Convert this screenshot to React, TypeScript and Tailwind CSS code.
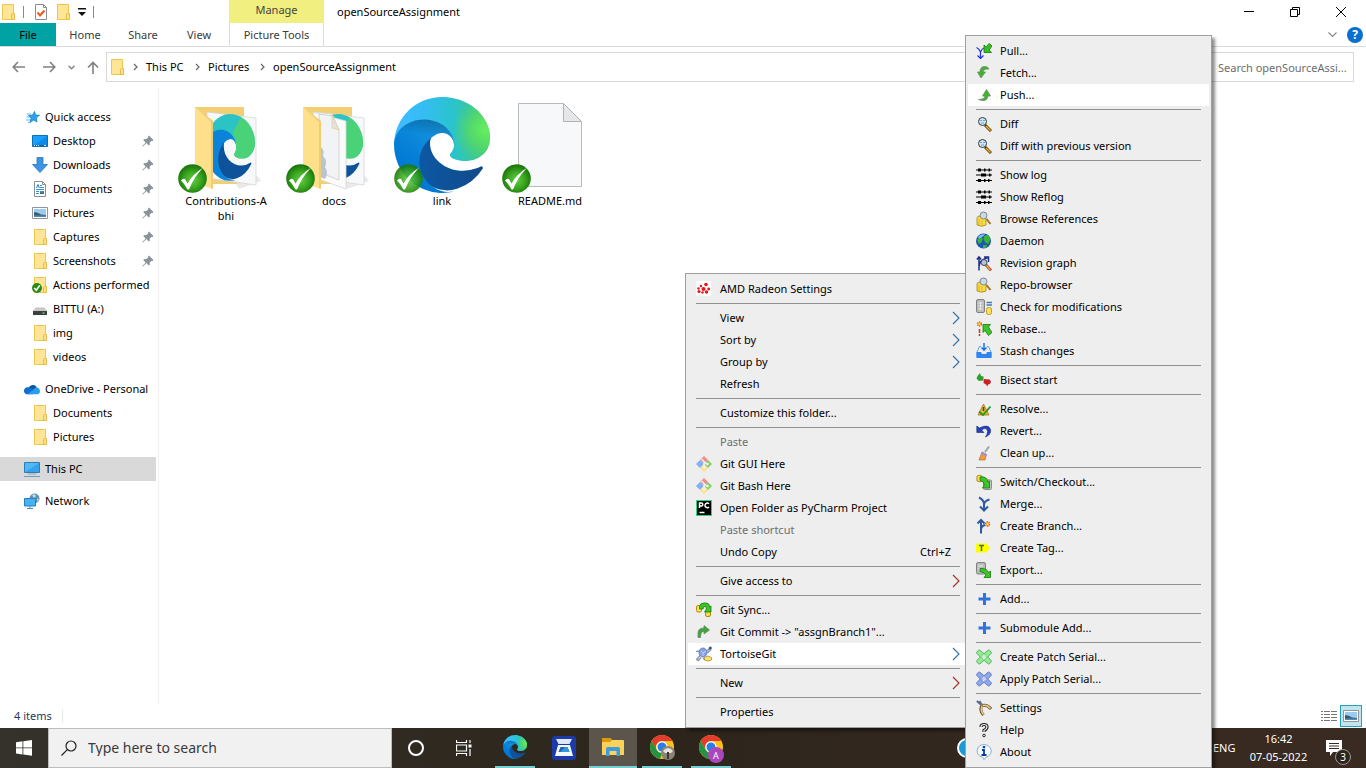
import React, { useId } from "react";

type IconProps = { className?: string };

const S = ({ children, className = "size-4", box = "0 0 16 16" }: { children: React.ReactNode; className?: string; box?: string }) => (
  <svg viewBox={box} className={`${className} shrink-0`} aria-hidden="true" fill="none">
    {children}
  </svg>
);

/* ---------- explorer icons ---------- */

const FolderIcon = ({ className = "size-4" }: IconProps) => (
  <S className={className}>
    <path d="M2.500.5h11v15h-11z" fill="#ffe696" stroke="#eec54e" />
    <path d="M11.500 15.500v-5q0-1 1-1h2v6z" fill="#ffe08a" stroke="#e9bb3f" />
  </S>
);

const SyncedFolderIcon = () => (
  <S>
    <path d="M2.500.5h11v15h-11z" fill="#ffe696" stroke="#eec54e" />
    <path d="M11.500 15.500v-5q0-1 1-1h2v6z" fill="#ffe08a" stroke="#e9bb3f" />
    <circle cx="5" cy="11" r="5" fill="#2c8a17" />
    <path d="M2.300 11l2 2.200L7.800 8.400" stroke="#fff" strokeWidth="1.600" />
  </S>
);

const CheckPageIcon = () => (
  <S>
    <path d="M2.500.5h8l3 3v12h-11z" fill="#fff" stroke="#8a8f94" />
    <path d="M10.500.5v3h3" stroke="#8a8f94" />
    <path d="M4.500 8.500l2.500 3 4.500-5" stroke="#f05a1e" strokeWidth="2" />
  </S>
);

const StarIcon = () => (
  <S>
    <path d="M10.500 2.500L11.500 6l4 .3-3.200 2.500.7 4.200-3.300-2-3.700 2.500 1-4.200L4.500 6.500l4-.4z" fill="#2ea3ea" stroke="#1a82cf" strokeWidth=".8" />
    <path d="M3 5h4M2.500 8h3M2 11h4M4 13.500h2" stroke="#58b8f0" />
  </S>
);

const DesktopIcon = () => (
  <S>
    <path d="M.5 2.500h15v11H.5z" fill="#1aa1fb" stroke="#0b70b8" />
    <path d="M1 13L15 3v10z" fill="#0c8cea" />
    <path d="M1 12.500h14" stroke="#0a64a6" />
    <path d="M2 12.500h1m1 0h1m1 0h1m5 0h2" stroke="#d8f0ff" />
  </S>
);

const DownloadIcon = () => (
  <S>
    <path d="M5 .5h6v7h4.500L8 15.500.5 7.500H5z" fill="#3d93e0" stroke="#2477c5" strokeWidth=".8" />
  </S>
);

const DocumentIcon = () => (
  <S>
    <path d="M2.500.5h8l3 3v12h-11z" fill="#fff" stroke="#8a8f94" />
    <path d="M10.500.5v3h3" stroke="#8a8f94" />
    <path d="M8 4.500h2M8 6.500h4M4 8.500h8M4 10.500h3M4 12.500h3" stroke="#3d93d8" />
    <path d="M4.500 7L6 3.500 7.300 7" stroke="#1f7fca" />
    <path d="M8 10h4v3H8z" fill="#4a8fc0" />
    <path d="M8 11.500h4V13H8z" fill="#42705f" />
  </S>
);

const PictureIcon = () => (
  <S>
    <path d="M.5 2.500h15v11H.5z" fill="#fff" stroke="#8e959b" />
    <path d="M2 4h12v8H2z" fill="#9ccbf0" />
    <path d="M2 7q4 0 7 2.500l5 .5v2H2z" fill="#365f6e" />
    <path d="M2 10.500h12V12H2z" fill="#5a88b8" />
  </S>
);

const DriveIcon = () => (
  <S>
    <path d="M3.500 6.500h9L15 10H1z" fill="#c6c8ca" />
    <path d="M1 10h14v4H1z" fill="#3c3e40" />
    <path d="M10.500 12h2" stroke="#4be05a" strokeWidth="1.400" />
  </S>
);

const OneDriveIcon = () => (
  <S>
    <path d="M4.500 7a4.600 4.600 0 0 1 8.300-.8L8 11z" fill="#0a55a6" />
    <path d="M1.500 12.700A3.600 3.600 0 0 1 3.800 6.200q1.600-.3 3 .6L12 11l-3 2.300H3.500q-1.200 0-2-.6z" fill="#0f6fd0" />
    <path d="M9.500 8.500q1.500-2.600 3.800-2 2.700.8 2.700 3.400 0 3.400-3.500 3.400H3.600z" fill="#2b9df0" />
  </S>
);

const PcIcon = () => (
  <S>
    <path d="M.5 1.500h15v10H.5z" fill="#4fb8f7" stroke="#2c7db5" />
    <path d="M1 11L15 2v9z" fill="#35a2ec" />
    <path d="M4 13h8" stroke="#8fa7b8" />
    <path d="M0 15.500h16" stroke="#6f9cc0" />
  </S>
);

const NetworkIcon = () => (
  <S>
    <circle cx="10.500" cy="5.500" r="5" fill="#5f93b3" />
    <path d="M8 2q3-2 4 1l-2 2zM13 5l2 2-1.500 2z" fill="#c7dbe6" />
    <path d="M.5 5.500h11v7.500H.5z" fill="#45b2f5" stroke="#2a7fb9" />
    <path d="M3 15.500h6M6 13v2" stroke="#4c8db8" />
  </S>
);

const PinIcon = () => (
  <S className="size-3" box="0 0 12 12">
    <path d="M7 .6L11.400 5l-1 1-.8-.3-1.900 2 .1 2-1 .9-2.400-2.500L.9 11.500l-.5-.4 3.200-3.700L1.300 5l.9-.9 2 .1L6.300 2.300 6 1.500z" fill="#87929b" />
  </S>
);

const EdgeLogo = ({ className = "size-24" }: IconProps) => {
  const id = useId();
  const crest =
    "M156.940 153.780c-.81 1.050-3.300 2.500-3.300 5.660 0 2.610 1.700 5.120 4.720 7.230 14.380 10 41.490 8.680 41.560 8.680a59.560 59.560 0 0 0 30.270-8.350 61.380 61.380 0 0 0 30.430-52.880c.26-22.410-8-37.310-11.340-43.910-21.190-41.440-66.930-65.280-116.670-65.280a128 128 0 0 0-128 126.200c.48-36.540 36.800-66.050 80-66.050 3.500 0 23.460.34 42 10.070 16.340 8.580 24.900 18.940 30.850 29.210 6.180 10.670 7.280 24.150 7.280 29.520s-2.740 13.330-7.800 19.900z";
  return (
    <S className={className} box="0 0 256 256">
      <defs>
        <linearGradient id={`${id}a`} x1="63.300" y1="177" x2="241" y2="177" gradientUnits="userSpaceOnUse">
          <stop offset="0" stopColor="#0c59a4" />
          <stop offset="1" stopColor="#114a8b" />
        </linearGradient>
        <linearGradient id={`${id}b`} x1="157" y1="95" x2="46" y2="217" gradientUnits="userSpaceOnUse">
          <stop offset="0" stopColor="#1b9de2" />
          <stop offset=".16" stopColor="#1595df" />
          <stop offset=".67" stopColor="#0680d7" />
          <stop offset="1" stopColor="#0078d4" />
        </linearGradient>
        <linearGradient id={`${id}c`} x1="20" y1="110" x2="250" y2="110" gradientUnits="userSpaceOnUse">
          <stop offset="0" stopColor="#3dbcff" />
          <stop offset=".25" stopColor="#36bdf5" />
          <stop offset=".6" stopColor="#2ac3cf" />
          <stop offset="1" stopColor="#40cb80" />
        </linearGradient>
        <radialGradient id={`${id}d`} cx="250" cy="92" r="90" gradientUnits="userSpaceOnUse">
          <stop offset="0" stopColor="#66f05e" />
          <stop offset=".5" stopColor="#58dc62" stopOpacity=".8" />
          <stop offset="1" stopColor="#4fd070" stopOpacity="0" />
        </radialGradient>
        <linearGradient id={`${id}e`} x1="100" y1="60" x2="90" y2="110" gradientUnits="userSpaceOnUse">
          <stop offset="0" stopColor="#003a6b" stopOpacity=".45" />
          <stop offset="1" stopColor="#003a6b" stopOpacity="0" />
        </linearGradient>
      </defs>
      <g transform="translate(-4.630 -4.920)">
        <path d="M235.680 190.500a93.730 93.730 0 0 1-10.540 4.710 101.870 101.870 0 0 1-35.900 6.460c-47.320 0-88.540-32.550-88.540-74.320a31.480 31.480 0 0 1 16.430-27.310c-42.800 1.800-53.800 46.400-53.800 72.530 0 73.880 68.090 81.370 82.760 81.370 7.910 0 19.840-2.300 27-4.560l1.310-.44a128.340 128.340 0 0 0 66.600-52.800 4 4 0 0 0-5.320-5.640z" fill={`url(#${id}a)`} />
        <path d="M110.340 246.340A79.200 79.200 0 0 1 87.600 225a80.720 80.720 0 0 1 29.530-120c3.120-1.470 8.450-4.130 15.540-4a32.350 32.350 0 0 1 25.690 13 31.880 31.880 0 0 1 6.360 18.660c0-.21 24.460-79.600-80-79.600-43.900 0-80 41.660-80 78.210a130.150 130.150 0 0 0 12.110 56 128 128 0 0 0 156.380 67.110 75.550 75.550 0 0 1-62.780-8z" fill={`url(#${id}b)`} />
        <path d="M4.630 131q20-80 80-78 104 0 80 79.600a32 32 0 0 0-32-31.600q-7 0-15.500 4-30 20-113 26z" fill={`url(#${id}e)`} />
        <path d={crest} fill={`url(#${id}c)`} />
        <path d={crest} fill={`url(#${id}d)`} />
      </g>
    </S>
  );
};

const SyncBadge = ({ translucent = false }: { translucent?: boolean }) => {
  const id = useId();
  return (
    <svg viewBox="0 0 29 29" className="absolute bottom-0 left-0 size-[29px]" aria-hidden="true" fill="none">
      <defs>
        <radialGradient id={id} cx=".5" cy=".55" r=".5">
          <stop offset="0" stopColor="#62cf43" />
          <stop offset=".6" stopColor="#3aa51f" />
          <stop offset="1" stopColor="#1d7a0c" />
        </radialGradient>
      </defs>
      <circle cx="14.500" cy="14.500" r="14.300" fill={`url(#${id})`} opacity={translucent ? 0.9 : 1} />
      <path d="M3 16.500q2-2.500 4-1.500l2.500 4.500Q15 10 25 3.800 16 13 11 25.500H9.500Q6.500 19.500 3 16.500z" fill="#fff" />
    </svg>
  );
};

const BigFolder = ({ docs = false }: { docs?: boolean }) => (
  <div className="relative size-24">
    <svg viewBox="0 0 96 96" className="size-24" fill="none" aria-hidden="true">
      <path d="M17 10h49v77H17z" fill="#f3cf73" />
      <path d="M61 92l22-8-4-5-21 8z" fill="#e9e9e9" />
      <path d="M29 15l49 6v67l-49-7z" fill="#f7f8fa" stroke="#d5d7da" strokeWidth=".8" />
      <svg x="27" y="17" width="50" height="67" viewBox="0 0 256 256" preserveAspectRatio="none">
        <path d="M231 186a94 94 0 0 1-46 11c-47 0-89-33-89-75a31 31 0 0 1 17-27c-43 2-54 46-54 73 0 73 68 81 83 81 8 0 20-2 27-5a128 128 0 0 0 68-53 4 4 0 0 0-6-5z" fill="#0e529a" />
        <path d="M106 241A79 79 0 0 1 83 220a81 81 0 0 1 30-120c3-1 8-4 15-4a32 32 0 0 1 26 13 32 32 0 0 1 6 19c0 0 24-80-80-80C36 48 0 90 0 126a130 130 0 0 0 12 56 128 128 0 0 0 156 67 76 76 0 0 1-62-8z" fill="#0b83d8" />
        <path d="M152 149c-1 1-3 2-3 6 0 2 2 5 5 7 14 10 41 8 41 8a61 61 0 0 0 61-61C256 87 248 72 244 65 223 24 177 0 128 0A128 128 0 0 0 0 126c0-36 37-66 80-66 4 0 24 0 42 10 16 9 25 19 31 30 6 10 7 24 7 29s-3 13-8 20z" fill="#2cc3c4" />
        <path d="M185 12q42 18 60 54c14 30 14 50 8 64a61 61 0 0 1-58 40s-27 2-41-8c-3-2-5-5-5-7 0-4 2-5 3-6 5-7 8-15 8-20 0-40-20-55-20-55z" fill="#51d665" opacity=".8" />
      </svg>
      {docs && (
        <>
          <path d="M27 15l33 9v68l-25-9z" fill="#fbfbfc" stroke="#d3d5d8" strokeWidth=".8" />
          <path d="M33 17l14 2 6 14v50l-18-7z" fill="#f2f3f4" stroke="#c8cacc" strokeWidth=".8" />
          <path d="M46 18v13l7 2z" fill="#e2e3e4" stroke="#e5cf98" strokeWidth=".8" />
          <path d="M34 50q5 2 3 9 5 5 2 11 4 6 0 12l-5-2z" fill="#b9c4cf" />
        </>
      )}
      <path d="M17 10l18 14v68l-18-6z" fill="#ffe08a" />
      <path d="M17 10l18 14v68l-2-.6V25z" fill="#f0cd74" />
    </svg>
    <SyncBadge />
  </div>
);

const BigPage = () => (
  <div className="relative size-24">
    <svg viewBox="0 0 96 96" className="size-24" fill="none" aria-hidden="true">
      <path d="M16.500 6.500h45l18 18v65h-63z" fill="#f7f8f9" stroke="#b9bbbd" />
      <path d="M61.500 6.500v18h18z" fill="#e6e7e8" stroke="#b0b2b4" />
    </svg>
    <SyncBadge />
  </div>
);

/* ---------- menu icons ---------- */

const AmdIcon = () => (
  <S>
    <path d="M0 0h15v15H0z" fill="#fff" />
    <g fill="#e8141c">
      <circle cx="7.500" cy="8" r="2" /><circle cx="2.500" cy="7.500" r="1.300" /><circle cx="5" cy="5" r="1.200" /><circle cx="10" cy="3.500" r="1.800" />
      <circle cx="12.700" cy="8" r="1.400" /><circle cx="10.500" cy="11" r="1.700" /><circle cx="6.500" cy="11.500" r="1.200" /><circle cx="3" cy="10.500" r="1.600" />
    </g>
  </S>
);

const GitIcon = () => (
  <S>
    <path d="M8 0l4 4-4 4-4-4z" fill="#f58a8a" />
    <path d="M12 4l4 4-4 4-4-4z" fill="#84cf68" />
    <path d="M4 4l4 4-4 4-4-4z" fill="#7fb0fa" />
    <path d="M8 8l4 4-4 4-4-4z" fill="#fde08a" />
    <path d="M5.500 3L11 8.500M8 5.500V12" stroke="#f4f4f4" strokeWidth="1.300" />
    <circle cx="11.500" cy="8" r="1.300" fill="#f4f4f4" /><circle cx="8" cy="11.500" r="1.300" fill="#f4f4f4" />
  </S>
);

const PyCharmIcon = () => (
  <span className="flex size-4 shrink-0 border border-[#21d789] bg-black" aria-hidden="true">
    <svg viewBox="0 0 14 14" className="size-[14px]" fill="none" stroke="#fff" strokeWidth="1.500">
      <path d="M2.500 7V2h1.800a1.500 1.500 0 0 1 0 3H2.500M12 2.800A2.300 2.300 0 1 0 12 6M2.500 11.500h5" />
    </svg>
  </span>
);

const SyncIcon = () => (
  <S>
    <rect x=".5" y="3.500" width="5" height="6.500" rx="1.500" fill="#fbe05a" stroke="#b58a12" />
    <rect x="9.500" y="8" width="5" height="6.500" rx="1.500" fill="#fbd94c" stroke="#b58a12" />
    <path d="M3.500 7V4.500Q4 1 8 1h2q3.500 0 3.500 4l1.500-1v6H8.500L10 8q1-4-2-3.500L7 7z" fill="#3fc52a" stroke="#16780c" strokeWidth=".8" />
  </S>
);

const CommitIcon = () => (
  <S>
    <path d="M2 13.500V9q0-5 6-5V1.500L13.500 6 8 10V7.500Q4.500 7 4.500 13.500z" fill="#3fa536" stroke="#6c8a6a" strokeWidth=".8" />
  </S>
);

const TortoiseIcon = () => (
  <S>
    <path d="M11 5l2-2 1.500 1-3 3M4 5L0 5.500M4 9.500l-3.500 4 2 1 2.500-3M7 12l2 2" stroke="#8b9cb8" strokeWidth="1.500" />
    <ellipse cx="7" cy="6.500" rx="4" ry="4.500" fill="#86a3e6" stroke="#5b74b0" strokeWidth=".8" />
    <path d="M5 5l2 2 3-2M7 7v3" stroke="#bfd1f8" />
    <circle cx="14.300" cy="2" r="1.500" fill="#31577e" />
    <path d="M8.500 11.500q3.500-3 7 0v2.500q-3.500 2-7 0z" fill="#fbe27a" stroke="#b38e20" strokeWidth=".8" />
  </S>
);

const PullIcon = () => (
  <S>
    <path d="M.5 4.500Q3 5.500 4.500 9 5.500 6 8 5M4.500 9v6M1.500 12.500L4.500 15.500 7.500 12.500" stroke="#1d2fe0" strokeWidth="1.200" />
    <path d="M8 2v7.500h7.500l-2.300-2.500L16 3l-3-2.600-2.700 3.600z" fill="#35c21f" stroke="#147a08" strokeWidth=".8" />
  </S>
);
const FetchIcon = () => (
  <S>
    <path d="M13 4Q12 1 8 1.500 4 2 4 7H1.500L5 13l4.500-6H7Q7.500 3.500 13 4z" fill="#43b32d" stroke="#6f8c6c" strokeWidth=".8" />
  </S>
);
const PushIcon = () => (
  <S>
    <path d="M2.500 12.500Q11 16 12 9h2.500L10.500 2.500 6.500 9H9Q8.500 12.500 2.500 12.500z" fill="#43b32d" stroke="#6f8c6c" strokeWidth=".8" />
  </S>
);
const MagnifierIcon = () => (
  <S>
    <path d="M9 9l6 6" stroke="#5a3a08" strokeWidth="3" />
    <path d="M10 10l4.500 4.500" stroke="#e9a52c" strokeWidth="1.600" />
    <circle cx="6.500" cy="5.500" r="4" fill="#cfe8f8" stroke="#30373c" />
    <path d="M4 4.500h2m1 0h2M5 7h3" stroke="#6ea5c6" />
  </S>
);
const LogIcon = () => (
  <S>
    <path d="M0 3h16M0 8h16M0 13.500h16" stroke="#000" />
    <path d="M2 3h3M8 3h1.500M12.500 3H14M5 8h5M13 8h1.500M2 13.500h3M8 13.500h1.500M12 13.500h1.500" stroke="#000" strokeWidth="3" />
  </S>
);
const BrowseIcon = () => (
  <S>
    <path d="M1 7q0-2 3-2h3q3 0 3 2v7q-4 2.500-9 0z" fill="#f9dc45" stroke="#a8841b" strokeWidth=".8" />
    <path d="M3 8v6M6 9v6" stroke="#e0b62a" />
    <path d="M10.500 8l4 5" stroke="#a57318" strokeWidth="2" />
    <circle cx="7.500" cy="4.500" r="3.500" fill="#cbd9e4" stroke="#7c8790" />
  </S>
);
const GlobeIcon = () => (
  <S>
    <circle cx="7.500" cy="8" r="7.500" fill="#1b56b0" />
    <path d="M1 7q2-3 4-3l2 2-2 4-2 1zM8 3l4-1.500L14.500 6l-2 5-3-1-2-4zM7 12l4 0-1 3-3 0z" fill="#3bb03a" />
    <path d="M2 4Q5 .5 9 1.500L6 4 3 5.500z" fill="#7fc8f2" />
  </S>
);
const GraphIcon = () => (
  <S>
    <path d="M3 15.500V2M.8 4.500L3 2l2.200 2.500M3 12Q3 5 12 2.500M8 2h4.500V6.500M12.500 3v4" stroke="#1e2e8e" strokeWidth="1.500" />
    <path d="M10 10l5 5.500" stroke="#a04a18" strokeWidth="2.800" />
    <path d="M10.500 10.500l4 4.500" stroke="#f0a060" strokeWidth="1.400" />
    <circle cx="8" cy="7.500" r="3" fill="#b3c5d6" stroke="#3d4654" />
  </S>
);
const CheckModsIcon = () => (
  <S>
    <rect x=".5" y=".5" width="8" height="13" rx="1.500" fill="#b9bbbd" stroke="#7f8183" />
    <path d="M2 4h5M2 7h5M2 10h5M4.500 3v8" stroke="#e3e4e5" />
    <path d="M10.500 3.500H16M10.500 6H16" stroke="#3f7fb0" strokeWidth="1.300" />
    <rect x="10.500" y="8.500" width="5" height="7" rx="2" fill="#fbe05a" stroke="#c29722" />
  </S>
);
const RebaseIcon = () => (
  <S>
    <circle cx="3.500" cy="3" r="2" fill="#ffd23a" stroke="#f0501e" strokeDasharray="1.200 .8" strokeWidth="1.400" />
    <path d="M3.500 8v4M3.500 13v2" stroke="#e8281c" strokeWidth="1.500" />
    <path d="M7 3.500h7.500L12.500 6l3.500 5.500-3.500 3L9 9.500 7 11.500z" fill="#3fc52a" stroke="#147a08" strokeWidth=".8" />
  </S>
);
const StashIcon = () => (
  <S>
    <path d="M5 3.500H3.500L1 9v5.500h14V9l-2.500-5.500H11" stroke="#5aa0f0" />
    <path d="M.5 9H5l1 2h4l1-2h4.500v6H.5z" fill="#2f86f2" />
    <path d="M8 0v7M5.500 4.500L8 7.200l2.500-2.700" stroke="#1d73dd" strokeWidth="1.500" />
  </S>
);
const BisectIcon = () => (
  <S>
    <path d="M4 1l1 3 2.500.5v4L3 9 .5 6.500 1.500 4z" fill="#2fa030" />
    <path d="M8 7l5.500.5 1.500 2-1 2.500-2 .5-.5 2-1.500-2L7.500 11z" fill="#cf1f26" />
  </S>
);
const ResolveIcon = () => (
  <S>
    <path d="M7.500 3L13 14H2z" fill="#efb52e" stroke="#a3761a" strokeWidth=".8" />
    <path d="M7.500 6v4" stroke="#5a3d06" strokeWidth="1.600" />
    <path d="M3 10.500l4 3.500 7.500-8.500" stroke="#1d9a1a" strokeWidth="1.800" />
  </S>
);
const RevertIcon = () => (
  <S>
    <path d="M.8 3v6.500H8L5.500 7Q11 3.500 11.500 8.500q0 3-2 5.500 6-2.500 5-7.500Q12.500.5 3.500 5z" fill="#2542b8" stroke="#15277c" strokeWidth=".6" />
  </S>
);
const BroomIcon = () => (
  <S>
    <path d="M13 1.500L9 7" stroke="#9aa4ae" strokeWidth="2" />
    <path d="M6 7l4.500 2.500L9 15H3z" fill="#f39b3d" stroke="#a9621a" strokeWidth=".6" />
    <path d="M6 6.500l5 3-1 1.800-5-2.500z" fill="#9c8fe0" />
  </S>
);
const SwitchIcon = () => (
  <S>
    <path d="M1 2q2-1.500 5 0v5q-3 1.500-5 0z" fill="#fbe05a" stroke="#b58a12" />
    <rect x="7.500" y="6" width="8" height="9.500" rx="1" fill="#c2c4c6" stroke="#8a8c8e" />
    <path d="M4 3q7-1 8 5l1.500-1v7H6.500L8.500 11Q8 7 4 6.500z" fill="#3fc52a" stroke="#147a08" strokeWidth=".8" />
  </S>
);
const MergeIcon = () => (
  <S>
    <path d="M3 1.500Q8 4 8 8v6M13.500 3.500Q8 5 8 9M4 10.500l4 4 4-4" stroke="#2f5aa0" strokeWidth="2" />
  </S>
);
const BranchIcon = () => (
  <S>
    <path d="M5 15.500V2M1.500 5.500L5 2l3.500 3.500M5 12q0-4 4-5" stroke="#2f5aa0" strokeWidth="2" />
    <circle cx="11.500" cy="6" r="2" fill="#ffe56a" stroke="#f0501e" strokeDasharray="1.200 .7" strokeWidth="1.600" />
  </S>
);
const TagIcon = () => (
  <S>
    <path d="M0 3.500h10.500L14 8l-3.500 4.500H0z" fill="#ffff00" />
    <path d="M3 5.500h5M5.500 5.500V11" stroke="#3e7a10" strokeWidth="1.500" />
  </S>
);
const ExportIcon = () => (
  <S>
    <rect x=".5" y=".5" width="9" height="11.500" rx="1.500" fill="#b9bbbd" stroke="#7f8183" />
    <path d="M2 4h5M2 7h3" stroke="#ececec" />
    <path d="M4 6.500q7-.5 8.500 4l2-1.500v6.500H8L10 13Q9 10 4 9.500z" fill="#3fc52a" stroke="#147a08" strokeWidth=".8" />
  </S>
);
const PlusIcon = () => (
  <S>
    <path d="M8.500 2v12M2.500 8h12" stroke="#2f74dd" strokeWidth="3" />
  </S>
);
const Patch = ({ fill, edge }: { fill: string; edge: string }) => (
  <S>
    <path d="M4 1.300q-.8-.6-1.600 0L.9 3Q.2 3.700.9 4.500L4.300 8 .9 11.500q-.7.800 0 1.500l1.500 1.700q.8.600 1.600 0L8 11.300l4 3.400q.8.600 1.600 0l1.500-1.700q.7-.7 0-1.500L11.700 8l3.400-3.500q.7-.8 0-1.500l-1.500-1.700q-.8-.6-1.600 0L8 4.700z" fill={fill} stroke={edge} />
    <path d="M4.500 8L8 4.500 11.500 8 8 11.500z" fill="#ffffff55" stroke={edge} strokeWidth=".7" />
    <path d="M7 7h.8M8.500 8.500h.8M7 9.500h.8M8.800 6.500h.6" stroke="#fff" />
  </S>
);
const GreenPatch = () => <Patch fill="#8fee94" edge="#62b068" />;
const BluePatch = () => <Patch fill="#8ba6f2" edge="#6a7fb8" />;
const SettingsIcon = () => (
  <S>
    <path d="M6 5.500Q3 10 7.500 15M6 5.500q5-1.500 9 3.500" stroke="#6e5630" strokeWidth="3" />
    <path d="M6 6q-2 4.500 1.500 8.500M6.500 5.500q4.500-1 8 3" stroke="#e8c98a" strokeWidth="1.500" />
    <path d="M.8 1l4.500 4M3.500 1l2 3.500" stroke="#5c6f88" strokeWidth="2" />
  </S>
);
const HelpIcon = () => (
  <S>
    <path d="M5 5q0-2.500 3-2.500t3 2.500Q11 7 8 8.500V10" stroke="#222" strokeWidth="3.200" />
    <path d="M5 5q0-2.500 3-2.500t3 2.500Q11 7 8 8.500V10" stroke="#e8e8e8" strokeWidth="1.200" />
    <circle cx="8" cy="13.500" r="1.300" fill="#eee" stroke="#222" />
  </S>
);
const AboutIcon = () => (
  <S>
    <path d="M8 .5a7.500 6.500 0 0 1 2 12.700L8 15.700l-1.500-2.500A7.500 6.500 0 0 1 8 .5z" fill="#f3f8fd" stroke="#8fb0cf" />
    <path d="M8 2v2.200" stroke="#0d3c9c" strokeWidth="2.400" />
    <path d="M6 6h2v5M5.500 11h5" stroke="#0d3c9c" strokeWidth="1.800" />
  </S>
);

/* ---------- menus ---------- */

type Entry =
  | null
  | { label: string; Icon?: React.FC; sub?: boolean; off?: boolean; hot?: boolean; keys?: string };

const folderMenu: Entry[] = [
  { label: "AMD Radeon Settings", Icon: AmdIcon },
  null,
  { label: "View", sub: true },
  { label: "Sort by", sub: true },
  { label: "Group by", sub: true },
  { label: "Refresh" },
  null,
  { label: "Customize this folder..." },
  null,
  { label: "Paste", off: true },
  { label: "Git GUI Here", Icon: GitIcon },
  { label: "Git Bash Here", Icon: GitIcon },
  { label: "Open Folder as PyCharm Project", Icon: PyCharmIcon },
  { label: "Paste shortcut", off: true },
  { label: "Undo Copy", keys: "Ctrl+Z" },
  null,
  { label: "Give access to", sub: true },
  null,
  { label: "Git Sync...", Icon: SyncIcon },
  { label: 'Git Commit -> "assgnBranch1"...', Icon: CommitIcon },
  { label: "TortoiseGit", Icon: TortoiseIcon, sub: true, hot: true },
  null,
  { label: "New", sub: true },
  null,
  { label: "Properties" },
];

const gitMenu: Entry[] = [
  { label: "Pull...", Icon: PullIcon },
  { label: "Fetch...", Icon: FetchIcon },
  { label: "Push...", Icon: PushIcon, hot: true },
  null,
  { label: "Diff", Icon: MagnifierIcon },
  { label: "Diff with previous version", Icon: MagnifierIcon },
  null,
  { label: "Show log", Icon: LogIcon },
  { label: "Show Reflog", Icon: LogIcon },
  { label: "Browse References", Icon: BrowseIcon },
  { label: "Daemon", Icon: GlobeIcon },
  { label: "Revision graph", Icon: GraphIcon },
  { label: "Repo-browser", Icon: BrowseIcon },
  { label: "Check for modifications", Icon: CheckModsIcon },
  { label: "Rebase...", Icon: RebaseIcon },
  { label: "Stash changes", Icon: StashIcon },
  null,
  { label: "Bisect start", Icon: BisectIcon },
  null,
  { label: "Resolve...", Icon: ResolveIcon },
  { label: "Revert...", Icon: RevertIcon },
  { label: "Clean up...", Icon: BroomIcon },
  null,
  { label: "Switch/Checkout...", Icon: SwitchIcon },
  { label: "Merge...", Icon: MergeIcon },
  { label: "Create Branch...", Icon: BranchIcon },
  { label: "Create Tag...", Icon: TagIcon },
  { label: "Export...", Icon: ExportIcon },
  null,
  { label: "Add...", Icon: PlusIcon },
  null,
  { label: "Submodule Add...", Icon: PlusIcon },
  null,
  { label: "Create Patch Serial...", Icon: GreenPatch },
  { label: "Apply Patch Serial...", Icon: BluePatch },
  null,
  { label: "Settings", Icon: SettingsIcon },
  { label: "Help", Icon: HelpIcon },
  { label: "About", Icon: AboutIcon },
];

const Menu = ({ entries, label, className, ruleEnd }: { entries: Entry[]; label: string; className: string; ruleEnd: string }) => (
  <ul
    role="menu"
    aria-label={label}
    className={`absolute border border-[#a0a0a0] bg-[#eeeeee] py-1 pl-[2px] shadow-[3px_3px_3px_rgba(0,0,0,0.45)] ${className}`}
  >
    {entries.map((e, i) =>
      e === null ? (
        <li key={i} role="separator" className={`flex h-[7px] items-center pl-2 ${ruleEnd}`}>
          <span className="h-px flex-1 bg-[#919191]" />
        </li>
      ) : (
        <li key={i} role="none">
          <button
            type="button"
            role="menuitem"
            disabled={e.off}
            className={`flex h-[22px] w-full items-center gap-2 pl-2 text-left ${e.hot ? "bg-white" : ""} ${e.off ? "text-[#6d6d6d]" : "text-black"}`}
          >
            <span className="flex size-4 shrink-0">{e.Icon && <e.Icon />}</span>
            <span className="flex-1 whitespace-nowrap">{e.label}</span>
            {e.keys && <span className="pr-[14px]">{e.keys}</span>}
            {e.sub && (
              <svg viewBox="0 0 8 14" className="mr-[5px] h-[14px] w-2" fill="none" aria-hidden="true">
                <path d="M1 1l6 6-6 6" stroke={e.label === "New" || e.label === "Give access to" ? "#a03028" : "#2f6fa8"} strokeWidth="1.100" />
              </svg>
            )}
          </button>
        </li>
      ),
    )}
  </ul>
);

/* ---------- sidebar ---------- */

type Place = { label: string; Icon: React.FC; root?: boolean; pinned?: boolean; current?: boolean };

const places: Place[][] = [
  [
    { label: "Quick access", Icon: StarIcon, root: true },
    { label: "Desktop", Icon: DesktopIcon, pinned: true },
    { label: "Downloads", Icon: DownloadIcon, pinned: true },
    { label: "Documents", Icon: DocumentIcon, pinned: true },
    { label: "Pictures", Icon: PictureIcon, pinned: true },
    { label: "Captures", Icon: FolderIcon, pinned: true },
    { label: "Screenshots", Icon: FolderIcon, pinned: true },
    { label: "Actions performed", Icon: SyncedFolderIcon },
    { label: "BITTU (A:)", Icon: DriveIcon },
    { label: "img", Icon: FolderIcon },
    { label: "videos", Icon: FolderIcon },
  ],
  [
    { label: "OneDrive - Personal", Icon: OneDriveIcon, root: true },
    { label: "Documents", Icon: FolderIcon },
    { label: "Pictures", Icon: FolderIcon },
  ],
  [{ label: "This PC", Icon: PcIcon, root: true, current: true }],
  [{ label: "Network", Icon: NetworkIcon, root: true }],
];

const Sidebar = () => (
  <nav aria-label="Folders" className="flex w-[159px] shrink-0 flex-col gap-2 border-r border-[#f0f0f0] pt-[17px] pr-[2px]">
    {places.map((group, g) => (
      <ul key={g}>
        {group.map((p) => (
          <li key={p.label}>
            <a
              href="#"
              className={`flex h-6 items-center gap-[5px] pr-[2px] ${p.root ? "pl-6" : "pl-8"} ${p.current ? "bg-[#d9d9d9]" : ""}`}
            >
              <p.Icon />
              <span className="flex-1 whitespace-nowrap">{p.label}</span>
              {p.pinned && <PinIcon />}
            </a>
          </li>
        ))}
      </ul>
    ))}
  </nav>
);

/* ---------- taskbar ---------- */

const ChromeLogo = ({ badge }: { badge: React.ReactNode }) => (
  <span className="relative flex">
    <svg viewBox="0 0 24 24" className="size-6" aria-hidden="true">
      <circle cx="12" cy="12" r="12" fill="#fbc116" />
      <path d="M12 0a12 12 0 0 1 10.400 6H12a6 6 0 0 0-5.200 9L1.600 6A12 12 0 0 1 12 0z" fill="#e33b2e" />
      <path d="M1.600 6l5.200 9A6 6 0 0 0 12 18l-2 5.800A12 12 0 0 1 1.600 6z" fill="#229342" />
      <circle cx="12" cy="12" r="5.700" fill="#fff" />
      <circle cx="12" cy="12" r="4.500" fill="#2a7de9" />
    </svg>
    {badge}
  </span>
);

const ScannerIcon = () => (
  <S className="size-6" box="0 0 24 24">
    <rect width="24" height="24" rx="3" fill="#1c3aa8" />
    <path d="M4 3h16l-2.500 5h-11z" fill="#dfe6f5" />
    <path d="M6 9h12l3 11H3z" fill="#f4f7fc" />
    <path d="M8.500 11h7l2 5h-11z" fill="#1f62b8" />
    <path d="M13 11h2.500l2 5h-9z" fill="#2f9ad8" />
  </S>
);

const ExplorerIcon = () => (
  <S className="size-[22px]" box="0 0 22 22">
    <path d="M0 2h8l2 2h11q1 0 1 1v14H0z" fill="#fbd15a" />
    <path d="M0 2h8l2 2-2 2H0z" fill="#d99a0c" />
    <path d="M4 20v-7q0-2 2-2h10q2 0 2 2v7h-3.500v-5h-7v5z" fill="#3d9be0" />
  </S>
);

const TaskButton = ({ label, open = false, active = false, children }: { label: string; open?: boolean; active?: boolean; children: React.ReactNode }) => (
  <button type="button" aria-label={label} className={`flex h-10 w-12 flex-col items-center ${active ? "bg-[#5b554c]" : ""}`}>
    <span className="flex flex-1 items-center">{children}</span>
    {open && <span className={`h-[2px] bg-[#76cdd2] ${active ? "w-12" : "w-10"}`} />}
  </button>
);

const Taskbar = () => (
  <footer className="flex h-10 shrink-0 items-stretch bg-linear-to-r from-[#34322a] via-[#2d251c] to-[#3a2b22] text-white">
    <button type="button" aria-label="Start" className="flex w-12 items-center justify-center">
      <svg viewBox="0 0 16 16" className="size-4" fill="#fff" aria-hidden="true">
        <path d="M0 2.200l6.500-.9v6.200H0zM7.300 1.200L16 0v7.500H7.300zM0 8.300h6.500v6.200L0 13.600zM7.300 8.300H16v7.500l-8.700-1.200z" />
      </svg>
    </button>
    <label className="flex w-[344px] items-center gap-[11px] border border-[#bdbdbd] bg-[#f1f1f1] pl-3">
      <svg viewBox="0 0 16 16" className="size-4" fill="none" stroke="#222" strokeWidth="1.200" aria-hidden="true">
        <circle cx="10" cy="6" r="5" />
        <path d="M6.300 9.700L.5 15.500" />
      </svg>
      <input type="text" aria-label="Search Windows" placeholder="Type here to search" className="min-w-0 flex-1 bg-transparent text-[14px] outline-none placeholder:text-[#3a3a3a]" />
    </label>
    <TaskButton label="Cortana">
      <span className="size-4 rounded-full border-2 border-white" />
    </TaskButton>
    <TaskButton label="Task View">
      <svg viewBox="0 0 16 16" className="size-4" fill="none" stroke="#fff" strokeWidth="1.200" aria-hidden="true">
        <path d="M.5 0v2.500h10V0M.5 5h10v6H.5zM.5 16v-2.500h10V16M14 0v3M14 9v7" />
        <path d="M12.500 4.500h3v3h-3z" fill="#fff" stroke="none" />
      </svg>
    </TaskButton>
    <div className="flex gap-px pl-[3px]">
      <TaskButton label="Microsoft Edge" open><EdgeLogo className="size-6" /></TaskButton>
      <TaskButton label="Scanner"><ScannerIcon /></TaskButton>
      <TaskButton label="File Explorer" open active><ExplorerIcon /></TaskButton>
      <TaskButton label="Chrome" open>
        <ChromeLogo
          badge={
            <svg viewBox="0 0 14 14" className="absolute -right-px -bottom-px size-[14px]" aria-hidden="true">
              <circle cx="7" cy="7" r="7" fill="#8d8478" />
              <path d="M2 5q5-6 10 0l-2 2H4z" fill="#e6e3dc" />
              <path d="M6 6h2v7H6z" fill="#3b362f" />
            </svg>
          }
        />
      </TaskButton>
      <TaskButton label="Chrome, profile A" open>
        <ChromeLogo
          badge={<span className="absolute -right-px -bottom-1 flex size-4 items-center justify-center rounded-full bg-[#ab47bc] text-[9px] leading-none">A</span>}
        />
      </TaskButton>
    </div>
    <div className="ml-auto flex items-center pr-[23px]">
      <span className="mr-[236px] size-5 rounded-full border-2 border-white bg-[#1c9ad6]" />
      <span className="mr-3 w-6">ENG</span>
      <time className="mr-[17px] w-[59px] text-center leading-[18px]">
        16:42
        <br />
        07-05-2022
      </time>
      <button type="button" aria-label="Notifications" className="relative flex">
        <svg viewBox="0 0 18 18" className="size-[18px]" aria-hidden="true">
          <path d="M1 1h16v12H8l-3 4v-4H1z" fill="#fff" />
          <path d="M4 4.500h10M4 7h10M4 9.500h10" stroke="#3a2b22" />
        </svg>
        <span className="absolute -right-2 -bottom-2 flex size-4 items-center justify-center rounded-full border border-[#999] bg-[#2d251c] text-[10px] leading-none">3</span>
      </button>
    </div>
  </footer>
);

/* ---------- page ---------- */

const Crumb = () => (
  <svg viewBox="0 0 5 8" className="h-2 w-[5px]" fill="none" stroke="#666" strokeWidth="1.200" aria-hidden="true">
    <path d="M1 1l3 3-3 3" />
  </svg>
);

const files = [
  { name: "Contributions-Abhi", art: <BigFolder /> },
  { name: "docs", art: <BigFolder docs /> },
  { name: "link", art: <div className="relative size-24"><EdgeLogo /><SyncBadge translucent /></div> },
  { name: "README.md", art: <BigPage /> },
];

export default function App() {
  return (
    <div className="relative flex h-screen flex-col overflow-hidden bg-white font-['Noto_Sans','Open_Sans',sans-serif] text-[11px] leading-4 text-black">
      <header>
        <div className="grid grid-cols-[229px_95px_1fr_auto]">
          <div className="flex h-[23px] items-center">
            <FolderIcon />
            <span className="mr-[9px] ml-[7px] h-3 w-px bg-[#8a8a8a]" />
            <CheckPageIcon />
            <span className="w-[6px]" />
            <FolderIcon />
            <svg viewBox="0 0 8 8" className="mx-[7px] size-2" aria-hidden="true">
              <path d="M0 0h8v1.500H0zM0 4h8L4 8z" fill="#111" />
            </svg>
            <span className="h-3 w-px bg-[#8a8a8a]" />
          </div>
          <div className="flex h-[23px] items-center justify-center bg-[#f1ef80] pb-[3px] text-[#444]">Manage</div>
          <h1 className="flex items-center pl-[13px]">openSourceAssignment</h1>
          <div className="flex items-center pr-[2px]">
            <button type="button" aria-label="Minimize" className="flex h-[22px] w-[46px] items-center justify-center"><span className="h-px w-[10px] bg-black" /></button>
            <button type="button" aria-label="Restore" className="flex h-[22px] w-[46px] items-center justify-center">
              <svg viewBox="0 0 10 10" className="size-[10px]" fill="none" stroke="#000" aria-hidden="true"><path d="M.5 2.500h7v7h-7zM2.500 2.500v-2h7v7h-2" /></svg>
            </button>
            <button type="button" aria-label="Close" className="flex h-[22px] w-[46px] items-center justify-center">
              <svg viewBox="0 0 10 10" className="size-[10px]" fill="none" stroke="#000" aria-hidden="true"><path d="M0 0l10 10M10 0L0 10" /></svg>
            </button>
          </div>
        </div>
        <div className="flex h-6 items-stretch border-b border-[#dadbdc] text-[#3b3b3b]">
          <button type="button" className="w-14 bg-[#00a2a4] text-black">File</button>
          <button type="button" className="w-[58px]">Home</button>
          <button type="button" className="w-[58px]">Share</button>
          <button type="button" className="mr-[3px] w-[54px]">View</button>
          <button type="button" className="w-[95px] border-x border-[#dadbdc]">Picture Tools</button>
          <div className="ml-auto flex items-center gap-[10px] pr-[3px]">
            <svg viewBox="0 0 9 6" className="h-[6px] w-[9px]" fill="none" stroke="#8a8a8a" strokeWidth="1.200" aria-hidden="true"><path d="M.5.5l4 4 4-4" /></svg>
            <button type="button" aria-label="Help" className="flex size-4 items-center justify-center rounded-full bg-[#0b6fcf] text-[12px] font-bold text-white">?</button>
          </div>
        </div>
        <div className="flex items-center pt-[5px] pr-3 pb-[6px] pl-3">
          <div className="flex w-[94px] items-center">
            <button type="button" aria-label="Back" className="w-[30px]"><svg viewBox="0 0 14 12" className="h-3 w-[14px]" fill="none" stroke="#808080" strokeWidth="1.600" aria-hidden="true"><path d="M13 6H1.500M6 1L1.200 6 6 11" /></svg></button>
            <button type="button" aria-label="Forward" className="w-[26px]"><svg viewBox="0 0 14 12" className="h-3 w-[14px]" fill="none" stroke="#808080" strokeWidth="1.600" aria-hidden="true"><path d="M1 6h11.500M8 1l4.800 5L8 11" /></svg></button>
            <button type="button" aria-label="Recent locations" className="w-[19px]"><svg viewBox="0 0 7 5" className="h-[5px] w-[7px]" fill="none" stroke="#888" strokeWidth="1.500" aria-hidden="true"><path d="M.5.8l3 3 3-3" /></svg></button>
            <button type="button" aria-label="Up"><svg viewBox="0 0 12 13" className="h-[13px] w-3" fill="none" stroke="#808080" strokeWidth="1.600" aria-hidden="true"><path d="M6 13V1.500M1 6.500l5-5 5 5" /></svg></button>
          </div>
          <div className="flex h-[30px] flex-1 items-center border border-[#d9d9d9] pl-[2px]">
            <FolderIcon />
            <span className="flex w-[21px] justify-center"><Crumb /></span>
            <a href="#" className="w-10">This PC</a>
            <span className="flex w-[22px] justify-center"><Crumb /></span>
            <a href="#" className="w-[43px]">Pictures</a>
            <span className="flex w-[22px] justify-center"><Crumb /></span>
            <a href="#">openSourceAssignment</a>
          </div>
          <input type="text" aria-label="Search openSourceAssignment" placeholder="Search openSourceAssi..." className="ml-3 h-[30px] w-[150px] border border-[#d9d9d9] pl-[13px] outline-none placeholder:text-[#6d6d6d]" />
        </div>
      </header>

      <div className="flex min-h-0 flex-1">
        <Sidebar />
        <main className="flex flex-1 items-start gap-3 pt-[9px] pl-[19px]">
          {files.map((f) => (
            <figure key={f.name} className="flex w-24 flex-col items-center">
              {f.art}
              <figcaption className="max-w-[86px] text-center leading-[15px] break-all">{f.name}</figcaption>
            </figure>
          ))}
        </main>
      </div>

      <div className="flex h-6 shrink-0 items-center pl-[14px] text-[#1e395b]">
        <span>4 items</span>
        <span className="ml-[10px] h-3 w-px bg-[#e5e5e5]" />
        <div className="ml-auto flex items-center pr-1">
          <button type="button" aria-label="Details view" className="flex h-[22px] w-[22px] items-center justify-center">
            <svg viewBox="0 0 16 12" className="h-3 w-4" stroke="#777" aria-hidden="true"><path d="M0 1.500h2M3 1.500h6M10 1.500h6M0 4.500h2M3 4.500h6M10 4.500h6M0 7.500h2M3 7.500h6M10 7.500h6M0 10.500h2M3 10.500h6M10 10.500h6" /></svg>
          </button>
          <button type="button" aria-label="Large icons view" className="flex h-[22px] w-[22px] items-center justify-center border border-[#2a9fb8] bg-[#bfe6ee]"><PictureIcon /></button>
        </div>
      </div>

      <Taskbar />

      <Menu entries={folderMenu} label="Folder" className="top-[273px] left-[685px] w-[281px]" ruleEnd="pr-[5px]" />
      <Menu entries={gitMenu} label="TortoiseGit" className="top-[35px] left-[965px] w-[247px] pr-[2px]" ruleEnd="pr-2" />
    </div>
  );
}
